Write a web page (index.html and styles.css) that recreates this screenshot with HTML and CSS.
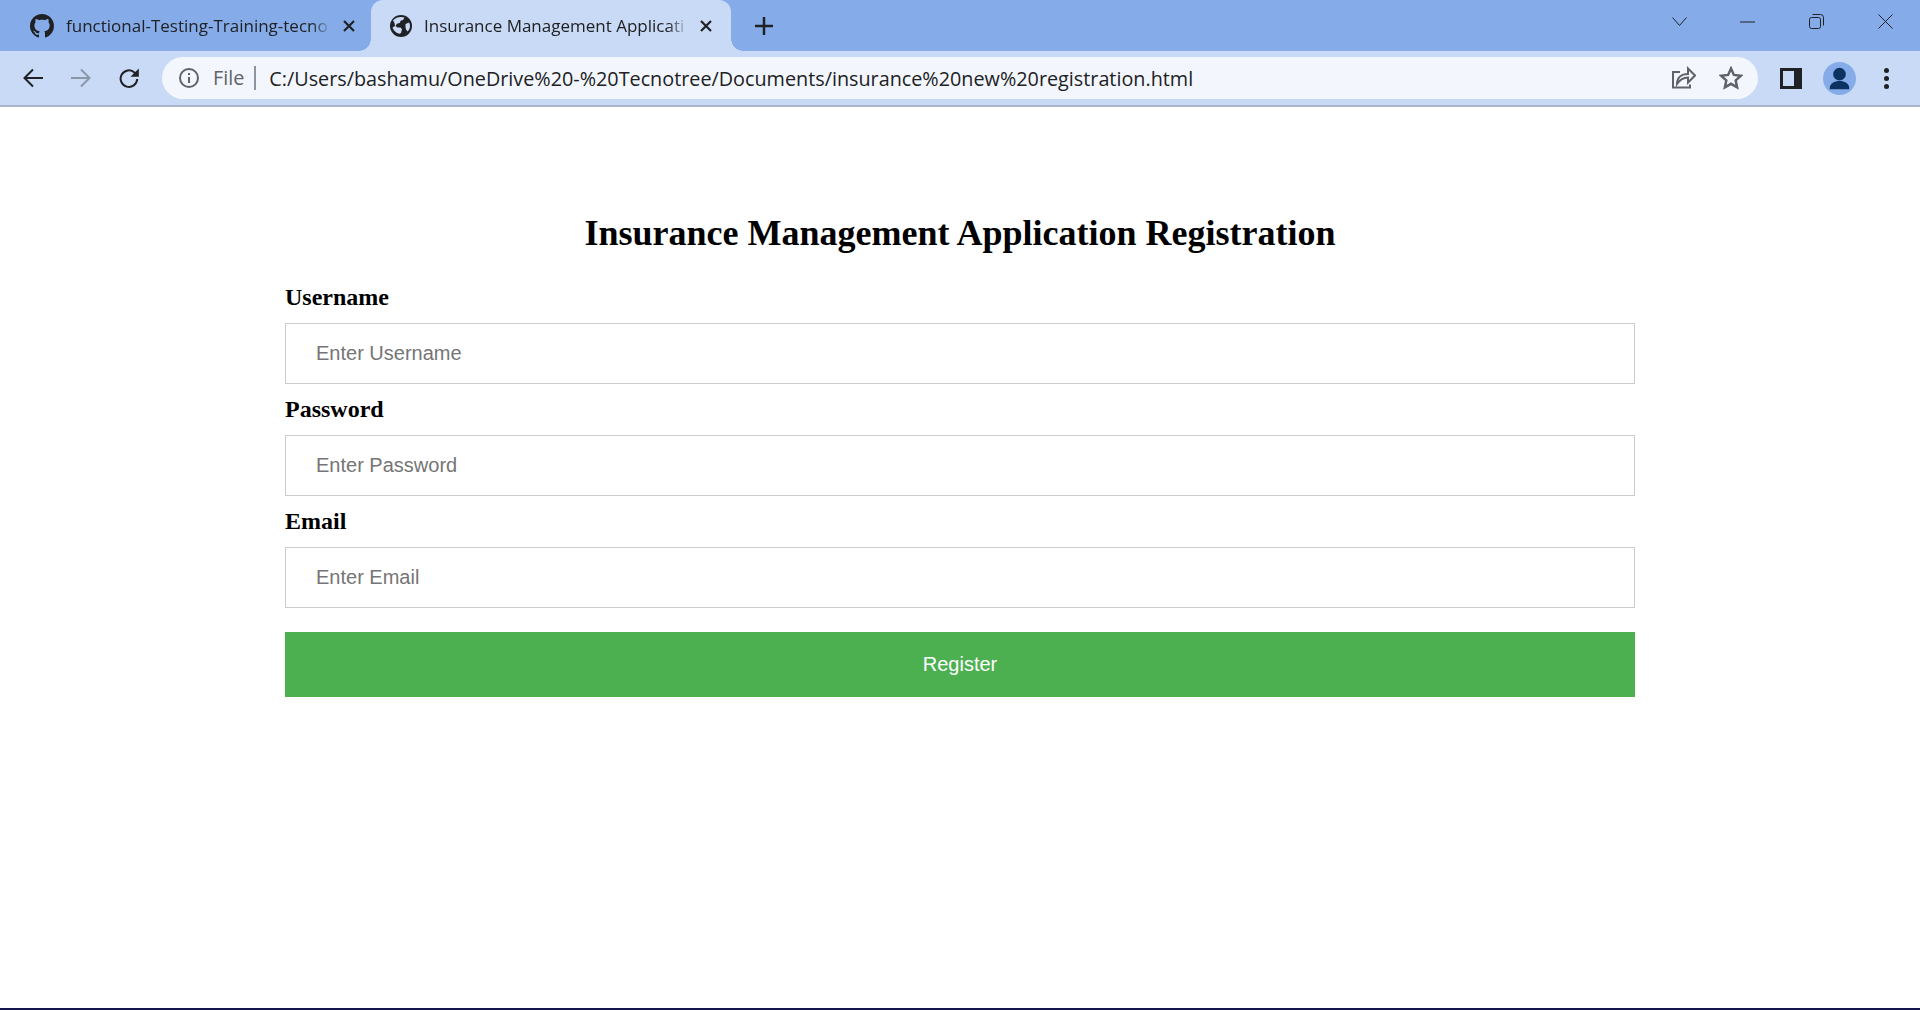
FILE: index.html
```html
<!DOCTYPE html>
<html lang="en">
<head>
	<title>Insurance Management Application Registration</title>
	<link rel="stylesheet" href="styles.css">
</head>
<body>
	<div class="tabstrip">
		<div class="tab">
			<svg class="favicon" viewBox="0 0 16 16"><path fill="#202124" d="M8 0C3.58 0 0 3.58 0 8c0 3.54 2.29 6.53 5.47 7.59.4.07.55-.17.55-.38 0-.19-.01-.82-.01-1.49-2.01.37-2.53-.49-2.69-.94-.09-.23-.48-.94-.82-1.13-.28-.15-.68-.52-.01-.53.63-.01 1.08.58 1.23.82.72 1.21 1.87.87 2.33.66.07-.52.28-.87.51-1.07-1.78-.2-3.64-.89-3.64-3.95 0-.87.31-1.59.82-2.15-.08-.2-.36-1.02.08-2.12 0 0 .67-.21 2.2.82.64-.18 1.32-.27 2-.27s1.36.09 2 .27c1.53-1.04 2.2-.82 2.2-.82.44 1.1.16 1.92.08 2.12.51.56.82 1.27.82 2.15 0 3.07-1.87 3.75-3.65 3.95.29.25.54.73.54 1.48 0 1.07-.01 1.93-.01 2.2 0 .21.15.46.55.38A8.01 8.01 0 0 0 16 8c0-4.42-3.58-8-8-8z"/></svg>
			<span class="tab-title">functional-Testing-Training-tecno</span>
			<svg class="tab-close" viewBox="0 0 12 12"><path d="M1 1l10 10M11 1L1 11"/></svg>
		</div>
		<div class="tab tab-active">
			<svg class="favicon globe" viewBox="0 0 22 22"><circle cx="11" cy="11" r="11" fill="#202124"/><path fill="#c9daf6" d="M3 5.500C5 3 8 2 11 2c1.500 0 2.500.2 3.500.6L13 5l-2.500.8-.5 2-3 1-1.500 2.200 2 1.500h3l1.500 1.800-1 3.700-1.500.8C6 18 3.500 15.500 2.500 12.500L5 11 4.500 8zM15.500 9l3.500-1.500c.7 1.300 1 2.300 1 3.500 0 2-.8 4-2.300 5.500L16 14.500l-.5-2.500z"/></svg>
			<span class="tab-title">Insurance Management Applicati</span>
			<svg class="tab-close" viewBox="0 0 12 12"><path d="M1 1l10 10M11 1L1 11"/></svg>
		</div>
		<svg class="new-tab" viewBox="0 0 18 18"><path d="M9 0v18M0 9h18"/></svg>
		<div class="window-controls">
			<svg class="win-icon win-chevron" viewBox="0 0 15 9"><path d="M.5.5l7 8 7-8"/></svg>
			<svg class="win-icon win-min" viewBox="0 0 15 2"><path d="M0 1h15"/></svg>
			<svg class="win-icon win-max" viewBox="0 0 15 15"><rect x=".5" y="3.500" width="11" height="11" rx="2"/><path d="M3.500 .5h8a3 3 0 0 1 3 3v8"/></svg>
			<svg class="win-icon win-close" viewBox="0 0 15 15"><path d="M.5.5l14 14M14.500.5l-14 14"/></svg>
		</div>
	</div>

	<div class="toolbar">
		<svg class="nav-icon" viewBox="0 0 20 20"><path d="M20 10H2M10 1.500L1.500 10l8.500 8.500"/></svg>
		<svg class="nav-icon nav-disabled" viewBox="0 0 20 20"><path d="M0 10h18M10 1.500l8.500 8.500-8.500 8.500"/></svg>
		<svg class="nav-icon" viewBox="0 0 20 20"><path d="M18.200 11a8.300 8.300 0 1 1-2.500-6.300L18 7"/><path class="solid" d="M19.800 .5v8.300h-8.300z"/></svg>
		<div class="omnibox">
			<svg class="info-icon" viewBox="0 0 20 20"><circle cx="10" cy="10" r="9"/><path d="M10 9v6"/><path d="M10 5v2"/></svg>
			<span class="scheme">File</span>
			<span class="url">C:/Users/bashamu/OneDrive%20-%20Tecnotree/Documents/insurance%20new%20registration.html</span>
			<svg class="omni-icon" viewBox="0 0 24 24"><path d="M8 6H1v15.500h17v-3"/><path d="M5 18c0-6 4-10 11-10V2.500l7 7-7 7v-5c-5 0-8 2-11 6.500z"/></svg>
			<svg class="omni-icon omni-star" viewBox="0 0 24 24"><path d="M12 2.500l2.900 6.400 7 .8-5.200 4.700 1.400 6.900-6.100-3.500-6.100 3.500 1.400-6.900-5.200-4.700 7-.8z"/></svg>
		</div>
		<svg class="side-panel" viewBox="0 0 22 21"><rect width="22" height="21" fill="#202124"/><rect x="3" y="3" width="11" height="15" fill="#c9daf6"/></svg>
		<div class="avatar">
			<svg viewBox="0 0 34 34"><circle cx="17" cy="12.500" r="6.500"/><path d="M7 26.500c0-4.500 5-7 10-7s10 2.500 10 7v1.500H7z"/></svg>
		</div>
		<div class="menu-dots"><i></i><i></i><i></i></div>
	</div>

	<div class="page">
		<form class="form">
			<h2>Insurance Management Application Registration</h2>
			<label for="username">Username</label>
			<input type="text" id="username" placeholder="Enter Username">
			<label for="password">Password</label>
			<input type="password" id="password" placeholder="Enter Password">
			<label for="email">Email</label>
			<input type="email" id="email" placeholder="Enter Email">
			<button type="button">Register</button>
		</form>
	</div>
	<div class="taskbar-edge"></div>
</body>
</html>
```

FILE: styles.css
```css
* {
	box-sizing: border-box;
}

html, body {
	height: 100%;
}

body {
	margin: 0;
	display: flex;
	flex-direction: column;
	background-color: #fff;
	overflow: hidden;
}

/* browser chrome */
.tabstrip {
	display: flex;
	align-items: flex-start;
	height: 51px;
	padding-left: 11px;
	background-color: #85ace9;
	font-family: "Open Sans", sans-serif;
	font-size: 17px;
	color: #202124;
}

.tab {
	position: relative;
	display: flex;
	align-items: center;
	width: 360px;
	height: 51px;
	padding: 0 16px 0 19px;
}

.tab-active {
	background-color: #c9daf6;
	border-radius: 12px 12px 0 0;
	padding: 0 19px 0 18px;
}

.tab-active::before,
.tab-active::after {
	content: "";
	position: absolute;
	bottom: 0;
	width: 12px;
	height: 12px;
}

.tab-active::before {
	left: -12px;
	background: radial-gradient(circle at 0 0, transparent 11.500px, #c9daf6 12px);
}

.tab-active::after {
	right: -12px;
	background: radial-gradient(circle at 100% 0, transparent 11.500px, #c9daf6 12px);
}

.favicon {
	flex: none;
	width: 24px;
	height: 24px;
	margin-right: 12px;
	margin-top: 1px;
}

.globe {
	width: 22px;
	height: 22px;
	margin: 1px 12px 0 1px;
}

.tab-title {
	flex: 1;
	white-space: nowrap;
	-webkit-mask-image: linear-gradient(to left, transparent 0, #000 20px);
	mask-image: linear-gradient(to left, transparent 0, #000 20px);
}

.tab-close {
	flex: none;
	width: 12px;
	height: 12px;
	margin-left: 12px;
	fill: none;
	stroke: #202124;
	stroke-width: 2.200;
}

.new-tab {
	width: 18px;
	height: 18px;
	margin: 17px 0 0 24px;
	fill: none;
	stroke: #202124;
	stroke-width: 2.500;
}

.window-controls {
	display: flex;
	align-items: center;
	margin-left: auto;
	height: 43px;
}

.win-icon {
	fill: none;
	stroke: #202124;
	stroke-width: 1;
}

.win-chevron {
	width: 15px;
	height: 9px;
	margin-right: 53px;
}

.win-min {
	width: 15px;
	height: 2px;
	margin-right: 54px;
}

.win-max {
	width: 15px;
	height: 15px;
	margin-right: 54px;
}

.win-close {
	width: 15px;
	height: 15px;
	margin-right: 27px;
}

.toolbar {
	display: flex;
	align-items: center;
	flex: none;
	height: 56px;
	background-color: #c9daf6;
	border-bottom: 2px solid #a9b5c9;
}

.nav-icon {
	flex: none;
	width: 20px;
	height: 20px;
	margin-left: 23px;
	fill: none;
	stroke: #202124;
	stroke-width: 2;
}

.nav-icon + .nav-icon {
	margin-left: 28px;
}

.nav-disabled {
	stroke: #8b96a8;
}

.nav-icon .solid {
	fill: #202124;
	stroke: none;
}

.omnibox {
	display: flex;
	align-items: center;
	flex: none;
	width: 1596px;
	height: 42px;
	margin-left: 23px;
	padding: 0 15px 0 17px;
	background-color: #f3f7fd;
	border-radius: 21px;
	font-family: "Open Sans", sans-serif;
	font-size: 19.800px;
	color: #202124;
}

.info-icon {
	flex: none;
	width: 20px;
	height: 20px;
	fill: none;
	stroke: #5f6368;
	stroke-width: 2;
}

.scheme {
	margin-left: 14px;
	padding-right: 10px;
	border-right: 2px solid #8f959e;
	color: #5f6368;
	line-height: 24px;
}

.url {
	flex: 1;
	margin-left: 13px;
	white-space: nowrap;
}

.omni-icon {
	flex: none;
	width: 24px;
	height: 24px;
	margin-left: 24px;
	fill: none;
	stroke: #5f6368;
	stroke-width: 2;
}

.omni-star {
	margin-left: 23px;
	stroke-width: 2.500;
}

.side-panel {
	flex: none;
	width: 22px;
	height: 21px;
	margin-left: 22px;
}

.avatar {
	flex: none;
	width: 33px;
	height: 33px;
	margin-left: 21px;
	border-radius: 50%;
	background-color: #85ace9;
}

.avatar svg {
	display: block;
	fill: #0c3262;
}

.menu-dots {
	display: flex;
	flex-direction: column;
	gap: 3px;
	margin-left: 28px;
}

.menu-dots i {
	display: block;
	width: 5px;
	height: 5px;
	border-radius: 50%;
	background-color: #202124;
}

/* registration form */
.page {
	flex: 1;
	padding-top: 106px;
}

.form {
	display: flex;
	flex-direction: column;
	width: 1350px;
	margin: 0 auto;
}

h2 {
	margin: 0 0 30px;
	font-family: "Liberation Serif", serif;
	font-size: 36px;
	line-height: 41px;
	font-weight: bold;
	text-align: center;
	color: #000;
}

label {
	font-family: "Liberation Serif", serif;
	font-size: 24px;
	line-height: 27px;
	font-weight: bold;
	color: #000;
}

input {
	height: 61px;
	margin: 12px 0;
	padding: 0 30px;
	border: 1px solid #ccc;
	border-radius: 0;
	font-family: "Liberation Sans", sans-serif;
	font-size: 20px;
	outline: none;
}

input::placeholder {
	color: #757575;
}

button {
	height: 65px;
	margin-top: 12px;
	border: 0;
	background-color: #4caf50;
	color: #fff;
	font-family: "Liberation Sans", sans-serif;
	font-size: 20px;
}

.taskbar-edge {
	flex: none;
	height: 2px;
	background-color: #14144e;
}
```
